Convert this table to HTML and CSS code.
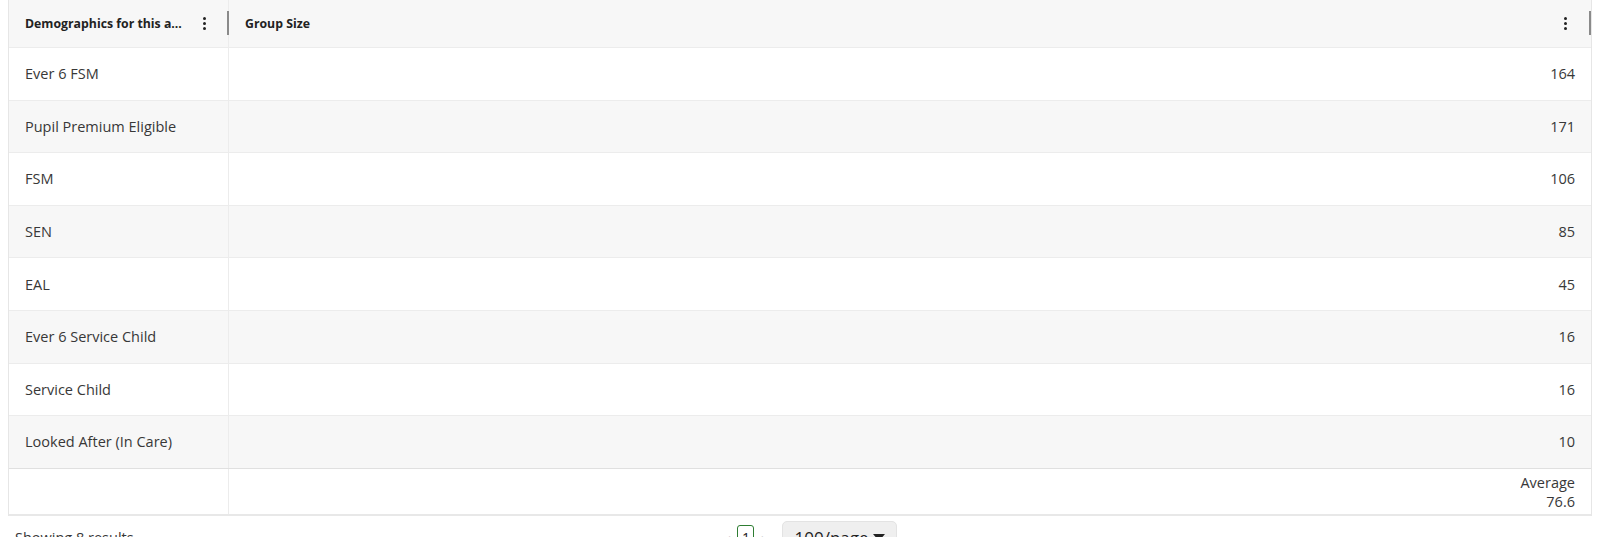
FILE: index.html
```html
<!DOCTYPE html>
<html lang="en">
<head>
<meta charset="utf-8">
<title>Demographics</title>
<link rel="stylesheet" href="styles.css">
</head>
<body>
<div class="table">
  <div class="row head">
    <div class="cell c1">
      <span class="htext">Demographics for this a...</span>
      <span class="kebab"><i></i><i></i><i></i></span>
      <span class="handle"></span>
    </div>
    <div class="cell c2">
      <span class="htext">Group Size</span>
      <span class="kebab"><i></i><i></i><i></i></span>
      <span class="handle"></span>
    </div>
  </div>
  <div class="row"><div class="cell c1">Ever 6 FSM</div><div class="cell c2 num">164</div></div>
  <div class="row alt"><div class="cell c1">Pupil Premium Eligible</div><div class="cell c2 num">171</div></div>
  <div class="row"><div class="cell c1">FSM</div><div class="cell c2 num">106</div></div>
  <div class="row alt"><div class="cell c1">SEN</div><div class="cell c2 num">85</div></div>
  <div class="row"><div class="cell c1">EAL</div><div class="cell c2 num">45</div></div>
  <div class="row alt"><div class="cell c1">Ever 6 Service Child</div><div class="cell c2 num">16</div></div>
  <div class="row"><div class="cell c1">Service Child</div><div class="cell c2 num">16</div></div>
  <div class="row alt"><div class="cell c1">Looked After (In Care)</div><div class="cell c2 num">10</div></div>
  <div class="row total"><div class="cell c1"></div><div class="cell c2 num agg">Average<br>76.6</div></div>
</div>
<div class="footer">
  <div class="results">Showing 8 results</div>
  <div class="pager">
    <span class="chev">&#8249;</span>
    <span class="page">1</span>
    <span class="chev">&#8250;</span>
    <button class="perpage" type="button">100/page <span class="caret"></span></button>
  </div>
  <div class="spacer"></div>
</div>
</body>
</html>
```

FILE: styles.css
```css
* { box-sizing: border-box; }
html, body { margin: 0; padding: 0; }
body {
  margin: 0 8px;
  font-family: "Open Sans", "Noto Sans", sans-serif;
  font-size: 14.5px;
  color: #383838;
  background: #fff;
  overflow: hidden;
  height: 537px;
}
.table {
  border-left: 1px solid #e6e6e6;
  border-right: 1px solid #e6e6e6;
}
.row {
  display: grid;
  grid-template-columns: 220px 1fr;
  height: 52.6px;
  border-bottom: 1px solid #ececec;
}
.row.alt { background: #f7f7f7; }
.row.head {
  height: 48px;
  background: #f7f7f7;
  border-bottom: 1px solid #ececec;
}
.cell {
  display: flex;
  align-items: center;
  padding: 0 16px;
  min-width: 0;
}
.cell.c1 { border-right: 1px solid #ececec; }
.head .cell { position: relative; font-weight: 700; font-size: 12.3px; color: #222; }
.head .c1 { padding-right: 14px; }
.htext { flex: 1; white-space: nowrap; overflow: hidden; }
.kebab {
  display: flex;
  flex-direction: column;
  gap: 1.6px;
  width: 3px;
  margin-right: 8px;
}
.kebab i {
  display: block;
  width: 3px;
  height: 3px;
  border-radius: 50%;
  background: #222;
}
.handle {
  position: absolute;
  right: -1px;
  top: 11px;
  width: 2px;
  height: 24px;
  background: #8a8a8a;
}
.head .c2 .handle { right: 0; }
.num { justify-content: flex-end; }
.row.total {
  height: 48px;
  background: #fff;
  border-top: 1px solid #e0e0e0;
  border-bottom: 2px solid #e8e8e8;
  margin-top: -1px;
}
.agg {
  text-align: right;
  line-height: 19px;
  align-items: center;
  padding-top: 1px;
}
.footer {
  display: flex;
  align-items: center;
  padding: 5px 7px 0 7px;
}
.results { flex: 1; }
.spacer { flex: 1; }
.pager {
  display: flex;
  align-items: center;
  margin-left: 18px;
}
.chev {
  color: #b5b5b5;
  font-size: 18px;
  width: 14px;
  text-align: center;
}
.page {
  display: inline-flex;
  align-items: center;
  justify-content: center;
  width: 17px;
  height: 26px;
  border: 1.5px solid #2e7d32;
  border-radius: 3px;
  color: #222;
  font-size: 14px;
  margin: 0 2px;
}
.perpage {
  margin-left: 12px;
  height: 34px;
  padding: 0 11px;
  border: 1px solid #e3e3e3;
  background: #efefef;
  border-radius: 5px;
  font-family: inherit;
  font-size: 17px;
  color: #222;
  display: inline-flex;
  align-items: center;
  gap: 4px;
}
.caret {
  width: 0; height: 0;
  border-left: 6px solid transparent;
  border-right: 6px solid transparent;
  border-top: 7px solid #222;
}
```
